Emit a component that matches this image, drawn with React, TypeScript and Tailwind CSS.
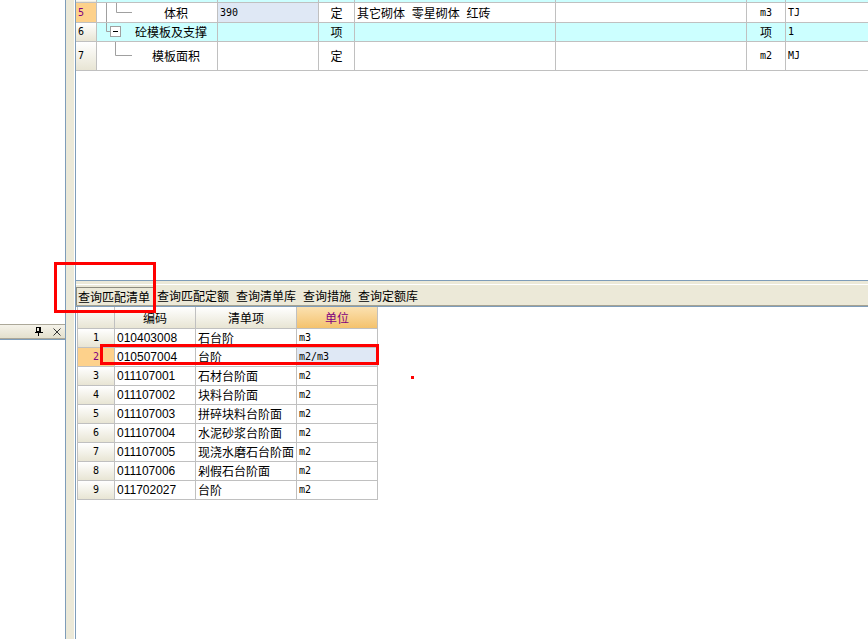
import React from 'react'

const mono = "font-['DejaVu_Sans_Mono',monospace] text-[10px]"
const rowHead = 'bg-gradient-to-b from-white to-[#e8e5d4]'

const items = [
  ['010403008', '石台阶', 'm3'],
  ['010507004', '台阶', 'm2/m3'],
  ['011107001', '石材台阶面', 'm2'],
  ['011107002', '块料台阶面', 'm2'],
  ['011107003', '拼碎块料台阶面', 'm2'],
  ['011107004', '水泥砂浆台阶面', 'm2'],
  ['011107005', '现浇水磨石台阶面', 'm2'],
  ['011107006', '剁假石台阶面', 'm2'],
  ['011702027', '台阶', 'm2'],
]

function Cell({ className = '', children }: { className?: string; children?: React.ReactNode }) {
  return <div className={`flex shrink-0 items-center border-r border-[#c0c0c0] ${className}`}>{children}</div>
}

function PinIcon() {
  return (
    <svg width="8" height="9" viewBox="0 0 8 9" className="block">
      <rect x="1.5" y="0.5" width="4" height="4" fill="none" stroke="#000" />
      <rect x="4" y="0" width="2" height="5" fill="#000" />
      <line x1="0" y1="5.5" x2="8" y2="5.5" stroke="#000" />
      <line x1="3.5" y1="6" x2="3.5" y2="9" stroke="#000" />
    </svg>
  )
}

function CloseIcon() {
  return (
    <svg width="8" height="8" viewBox="0 0 8 8" className="block">
      <path d="M0.5 0.5 L7.5 7.5 M7.5 0.5 L0.5 7.5" stroke="#333" strokeWidth="1" />
    </svg>
  )
}

// one row of the top (scrolled) grid
function TopRow({
  h,
  bg,
  head,
  headClass,
  tree,
  qty,
  qtyClass = '',
  kind,
  name,
  unit,
  code,
}: {
  h: string
  bg: string
  head?: string
  headClass?: string
  tree?: React.ReactNode
  qty?: string
  qtyClass?: string
  kind?: string
  name?: string
  unit?: React.ReactNode
  code?: string
}) {
  return (
    <div className={`flex ${h} border-b border-[#c0c0c0] ${bg}`}>
      <Cell className={`w-[21px] pl-[2px] ${mono} ${headClass ?? rowHead}`}>{head}</Cell>
      <Cell className="w-[121px]">{tree}</Cell>
      <Cell className={`w-[101px] pl-[2px] ${mono} ${qtyClass}`}>{qty}</Cell>
      <Cell className="w-[36px] justify-center">{kind}</Cell>
      <Cell className="w-[201px] pl-[2px] [word-spacing:4px]">{name}</Cell>
      <Cell className="w-[191px]" />
      <Cell className="w-[39px] justify-center">{unit}</Cell>
      <div className={`flex flex-1 items-center pl-[2px] ${mono}`}>{code}</div>
    </div>
  )
}

export default function App() {
  const line = '#a0a0a0'
  return (
    <div className="relative flex h-[639px] w-[868px] overflow-hidden bg-white text-[12px] leading-none text-black font-['Noto_Sans_CJK_SC',sans-serif]">
      {/* left dock */}
      <div className="flex w-[66px] shrink-0 flex-col border-r border-[#7f9db9]">
        <div className="h-[324px] shrink-0" />
        <div className="flex h-[15px] shrink-0 items-center justify-end gap-[10px] border-t border-b border-[#aca899] bg-gradient-to-b from-[#f5f3ea] to-[#e4e0cd] pr-[4px]">
          <PinIcon />
          <CloseIcon />
        </div>
        <div className="flex-1 border-t border-[#7f9db9] bg-white" />
      </div>
      <div className="w-[9px] shrink-0 border-r border-white bg-[#ece9d8]" />

      {/* main */}
      <div className="flex min-w-0 flex-1 flex-col border-l border-[#7f9db9]">
        <div className="h-[281px] shrink-0 border-b border-[#7f9db9]">
          <TopRow h="h-[3px]" bg="bg-[#ccffff]" />
          <TopRow
            h="h-[20px]"
            bg="bg-white"
            head="5"
            headClass="bg-[#fdd18b] text-[#800080]"
            tree={
              <>
                <svg width="36" height="19" className="block shrink-0">
                  <path d={`M9.5 0 V19 M19.5 0 V9.5 H35`} stroke={line} fill="none" />
                </svg>
                <span className="ml-[31px]">体积</span>
              </>
            }
            qty="390"
            qtyClass="self-stretch bg-[#dfe8f5]"
            kind="定"
            name="其它砌体 零星砌体 红砖"
            unit={<span className={mono}>m3</span>}
            code="TJ"
          />
          <TopRow
            h="h-[19px]"
            bg="bg-[#ccffff]"
            head="6"
            tree={
              <>
                <svg width="24" height="18" className="block shrink-0">
                  <path d="M9.5 0 V8.5 H13" stroke={line} fill="none" />
                  <rect x="13.5" y="3.5" width="10" height="10" fill="#fff" stroke={line} />
                  <path d="M16 8.5 H21" stroke="#000" />
                </svg>
                <span className="ml-[14px]">砼模板及支撑</span>
              </>
            }
            kind="项"
            unit="项"
            code="1"
          />
          <TopRow
            h="h-[29px]"
            bg="bg-white"
            head="7"
            tree={
              <>
                <svg width="36" height="28" className="block shrink-0">
                  <path d="M18.5 0 V13.5 H35" stroke={line} fill="none" />
                </svg>
                <span className="ml-[19px]">模板面积</span>
              </>
            }
            kind="定"
            unit={<span className={mono}>m2</span>}
            code="MJ"
          />
        </div>
        <div className="h-[3px] shrink-0 bg-[#ece9d8]" />
        <div className="h-px shrink-0 bg-white" />
        <div className="flex h-[21px] shrink-0 items-end border-b border-[#a5a292] bg-[#ece9d8]">
          <div className="flex h-[18px] items-center border-x border-t border-[#8e8c80] pl-[1px] pr-[3px]">查询匹配清单</div>
          <div className="flex h-[18px] items-center pl-[3px] pr-[4px]">查询匹配定额</div>
          <div className="flex h-[18px] items-center pl-[3px] pr-[4px]">查询清单库</div>
          <div className="flex h-[18px] items-center pl-[3px] pr-[4px]">查询措施</div>
          <div className="flex h-[18px] items-center pl-[3px] pr-[4px]">查询定额库</div>
        </div>
        <div className="h-px shrink-0 bg-[#7f9db9]" />

        {/* bottom grid */}
        <div className="flex-1 pl-[1px]">
          <div className="w-[301px] border-l border-[#c0c0c0]">
            <div className="flex h-[22px] border-b border-[#c0c0c0]">
              <Cell className={`w-[37px] ${rowHead}`} />
              <Cell className={`w-[81px] justify-center ${rowHead}`}>编码</Cell>
              <Cell className={`w-[101px] justify-center ${rowHead}`}>清单项</Cell>
              <Cell className="w-[81px] justify-center bg-gradient-to-b from-[#fbe1b0] to-[#f4c26c] text-[#800080]">单位</Cell>
            </div>
            {items.map(([code, name, unit], i) => (
              <div key={code + i} className="flex h-[19px] border-b border-[#c0c0c0]">
                <Cell
                  className={`w-[37px] justify-center ${mono} ${i === 1 ? 'bg-[#fdd18b] text-[#800080]' : rowHead}`}
                >
                  {i + 1}
                </Cell>
                <Cell className="w-[81px] pl-[2px] font-['Liberation_Sans',sans-serif] text-[12px]">{code}</Cell>
                <Cell className="w-[101px] pl-[2px]">{name}</Cell>
                <Cell className={`w-[81px] pl-[2px] ${mono} ${i === 1 ? 'bg-[#dfe8f5]' : ''}`}>{unit}</Cell>
              </div>
            ))}
          </div>
        </div>
      </div>

      {/* red annotation marks */}
      <div className="absolute left-[54px] top-[262px] h-[51px] w-[102px] border-[3px] border-[#ff0000]" />
      <div className="absolute left-[100px] top-[344px] h-[21px] w-[279px] border-[3px] border-[#ff0000]" />
      <div className="absolute left-[411px] top-[376px] h-[3px] w-[3px] bg-[#ff0000]" />
    </div>
  )
}
